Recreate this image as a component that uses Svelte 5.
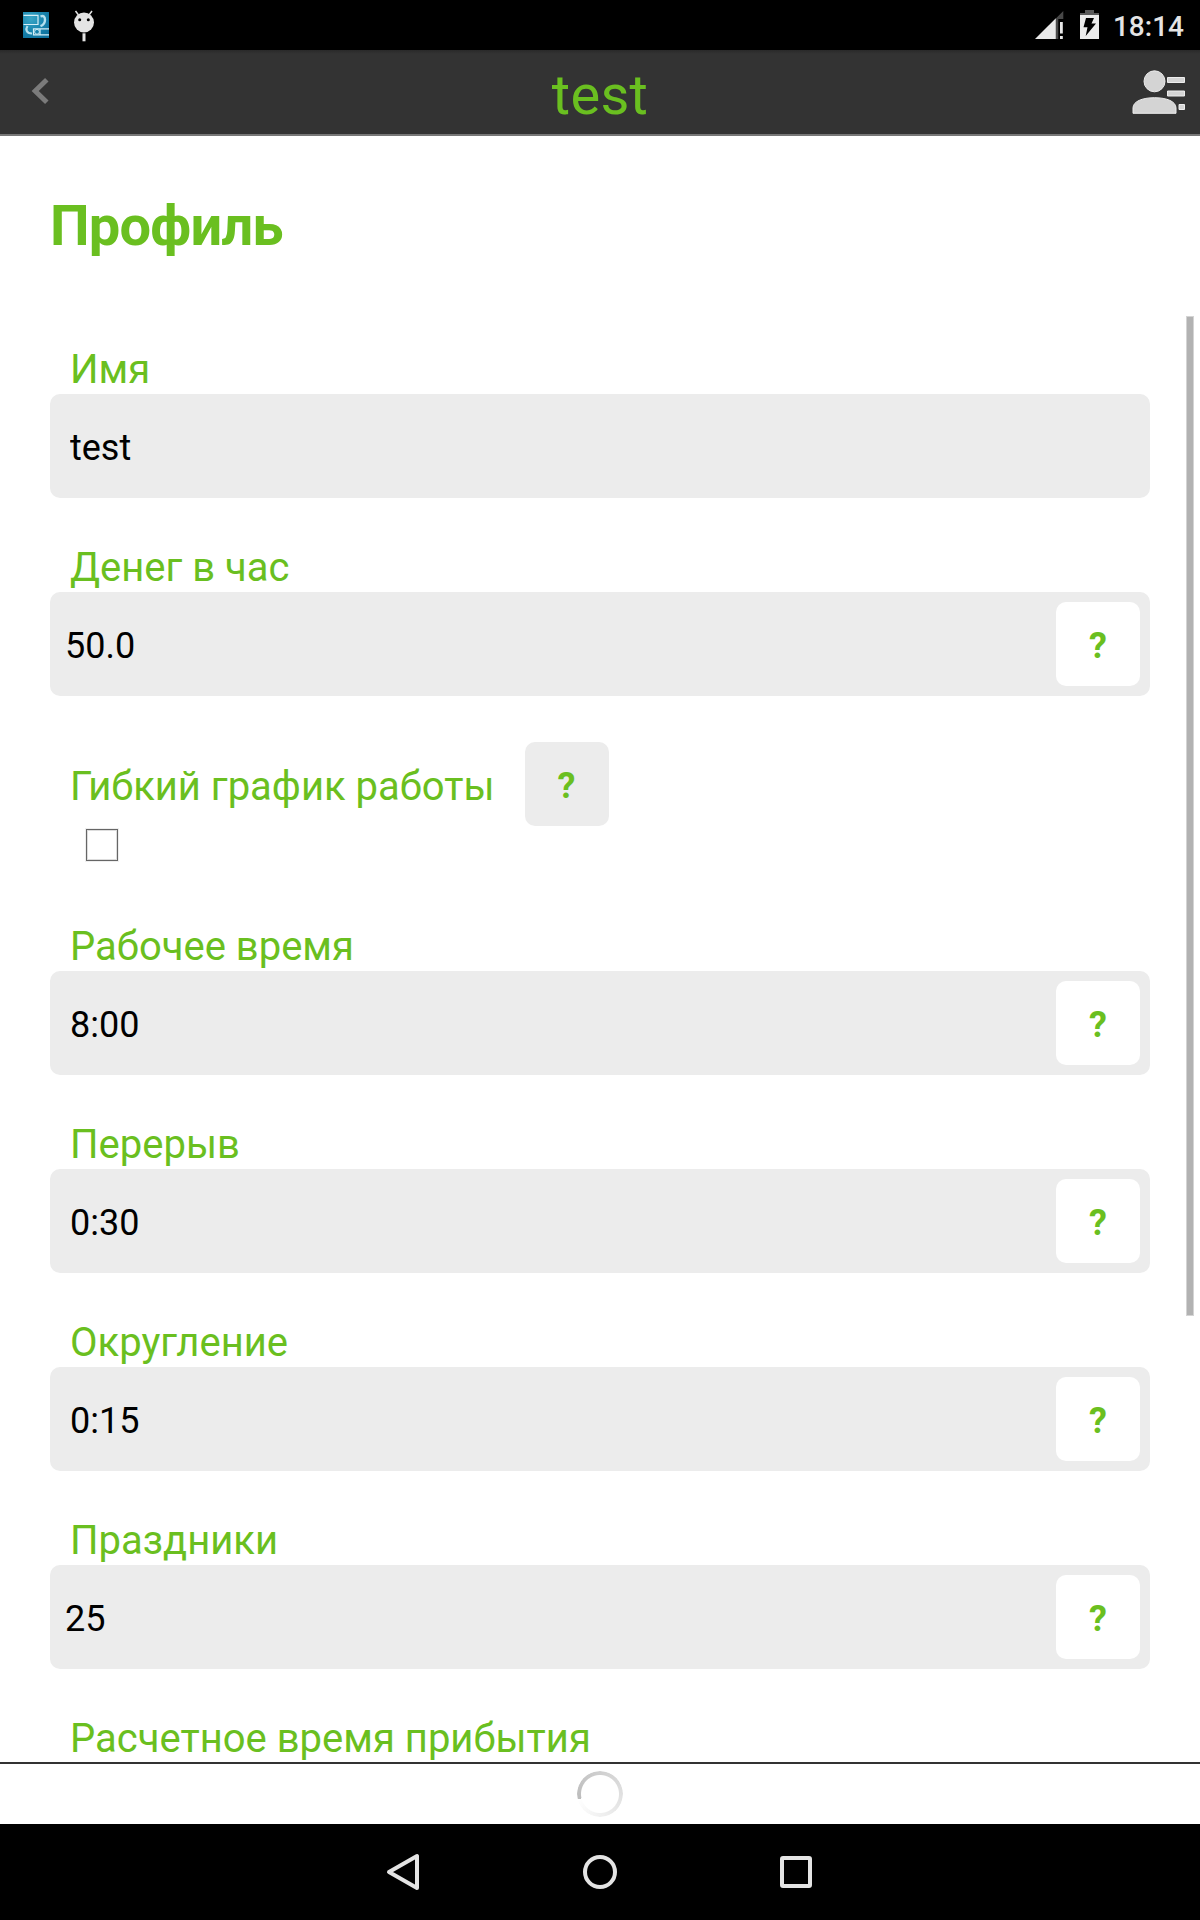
<script lang="ts">
  interface Field {
    id: string;
    label: string;
    value: string;
    help: boolean;
    kind?: "number" | "time" | "checkbox";
  }

  const title = "test";

  let fields = $state<Field[]>([
    { id: "name", label: "Имя", value: "test", help: false },
    { id: "rate", label: "Денег в час", value: "50.0", help: true, kind: "number" },
    { id: "flex", label: "Гибкий график работы", value: "", help: true, kind: "checkbox" },
    { id: "work", label: "Рабочее время", value: "8:00", help: true, kind: "time" },
    { id: "break", label: "Перерыв", value: "0:30", help: true, kind: "time" },
    { id: "round", label: "Округление", value: "0:15", help: true, kind: "time" },
    { id: "holidays", label: "Праздники", value: "25", help: true, kind: "number" },
    { id: "arrival", label: "Расчетное время прибытия", value: "", help: false, kind: "time" },
  ]);
</script>

<div class="screen">
  <div class="status-bar">
    <div class="notifications">
      <svg width="26" height="26" viewBox="0 0 26 26">
        <defs>
          <radialGradient id="tile" cx="0.3" cy="0.25" r="0.9">
            <stop offset="0" stop-color="#3aa6c6" />
            <stop offset="0.5" stop-color="#1a87b0" />
            <stop offset="1" stop-color="#0d6f9b" />
          </radialGradient>
        </defs>
        <rect width="26" height="26" fill="url(#tile)" />
        <path d="M0.5 3.3H15v9.2H0.5M26 16.8H10.5v6H26M17 16.8v6" fill="none" stroke="#d4eef6" stroke-width="1.2" />
        <circle cx="14" cy="19.8" r="2.4" fill="none" stroke="#c4e7f2" stroke-width="1" />
        <path d="M17.500 4.500c3-1.200 4.500 0 4.500 3.200 0 3-2 5.500-4.500 6.500" fill="none" stroke="#b4e0ee" stroke-width="2.400" />
        <path d="M4.500 14c-2 3-1.500 7.500 4.500 7.500" fill="none" stroke="#b4e0ee" stroke-width="2.200" />
      </svg>
      <svg width="22" height="32" viewBox="0 0 22 32">
        <path d="M2.500 1l3 4M19 1l-3 4" stroke="#e4e4e4" stroke-width="1.500" />
        <circle cx="11" cy="12.500" r="10" fill="#e4e4e4" />
        <circle cx="6.700" cy="9.700" r="1.500" fill="#000" />
        <circle cx="15.300" cy="9.700" r="1.500" fill="#000" />
        <rect x="9.500" y="23.300" width="3" height="8" fill="#e4e4e4" />
      </svg>
    </div>
    <div class="indicators">
      <svg width="29" height="29" viewBox="0 0 29 29">
        <path d="M28.300 0v8h-5v20h-2.500V7.500z" fill="#484848" />
        <path d="M0 28L20.800 7.300V28z" fill="#e8e8e8" />
        <rect x="25" y="11" width="2.800" height="11.500" fill="#e8e8e8" />
        <rect x="25" y="25" width="2.800" height="3" fill="#e8e8e8" />
      </svg>
      <svg class="battery" width="19" height="29" viewBox="0 0 19 29">
        <path d="M5 0h9v3h5v2H0V3h5z" fill="#5a5a5a" />
        <rect y="5" width="19" height="24" fill="#ececec" />
        <path d="M6 8h8l-2.500 5.500H16L5.700 26l1.800-8.700H3.500z" fill="#000" />
      </svg>
      <span class="clock">18:14</span>
    </div>
  </div>

  <header class="app-bar">
    <button class="icon-button" aria-label="Назад">
      <svg width="19" height="26" viewBox="0 0 19 26">
        <path d="M15.800 1.800L4.200 13l11.600 11.200" fill="none" stroke="#7b7b7b" stroke-width="5" />
      </svg>
    </button>
    <h1>{title}</h1>
    <button class="icon-button end" aria-label="Профиль">
      <svg width="54" height="45" viewBox="0 0 54 45">
        <g fill="#d4d4d4" stroke="#ededed">
          <circle cx="22.500" cy="11.300" r="10.500" />
          <path d="M1 43.300V38c0-6.500 9-10.300 21.500-10.300S44 31.500 44 38v5.300z" />
          <path d="M35.500 7.500h17v5h-17zM35.500 21h17v5h-17zM47 34.500h5.500v5H47z" />
        </g>
      </svg>
    </button>
  </header>

  <main>
    <h2>Профиль</h2>
    <div class="scroll-area">
      {#each fields as field (field.id)}
        <div class="field">
          {#if field.kind === "checkbox"}
            <div class="check-row">
              <label for={field.id}>{field.label}</label>
              <button class="help">?</button>
            </div>
            <input id={field.id} class="check" type="checkbox" />
          {:else}
            <label for={field.id}>{field.label}</label>
            <div class="box">
              <input
                id={field.id}
                type="text"
                class:number={field.kind === "number"}
                bind:value={field.value}
              />
              {#if field.help}
                <button class="help">?</button>
              {/if}
            </div>
          {/if}
        </div>
      {/each}
      <div class="scrollbar"></div>
    </div>
  </main>

  <footer>
    <div class="spinner"></div>
  </footer>

  <nav>
    <svg width="34" height="38" viewBox="0 0 34 38">
      <path d="M31 3v32L3 19z" fill="none" stroke="#e4e4e4" stroke-width="4" stroke-linejoin="round" />
    </svg>
    <svg width="36" height="36" viewBox="0 0 36 36">
      <circle cx="18" cy="18" r="15" fill="none" stroke="#e4e4e4" stroke-width="4" />
    </svg>
    <svg width="32" height="32" viewBox="0 0 32 32">
      <rect x="2" y="2" width="28" height="28" rx="1" fill="none" stroke="#e4e4e4" stroke-width="4" />
    </svg>
  </nav>
</div>

<style>
  :global(body) {
    margin: 0;
    background: #fff;
  }

  .screen {
    display: flex;
    flex-direction: column;
    width: 1200px;
    height: 1920px;
    overflow: hidden;
    font-family: Roboto, sans-serif;
    color: #6abf20;
  }

  button,
  input {
    margin: 0;
    padding: 0;
    border: 0;
    background: none;
    font-family: inherit;
    outline: none;
  }

  svg {
    display: block;
  }

  .status-bar {
    display: flex;
    justify-content: space-between;
    flex: none;
    height: 50px;
    background: #000;
  }

  .notifications {
    display: flex;
    gap: 24px;
    padding: 10px 0 0 23px;
  }

  .notifications svg:first-child {
    margin-top: 2px;
  }

  .indicators {
    display: flex;
    padding: 10px 16px 0 0;
  }

  .indicators svg:first-child {
    margin-top: 1px;
  }

  .battery {
    margin-left: 16px;
  }

  .clock {
    margin-left: 14px;
    color: #e4e4e4;
    font-size: 28px;
    font-weight: 500;
    line-height: 33px;
  }

  .app-bar {
    display: grid;
    grid-template-columns: 200px 1fr 200px;
    align-items: start;
    flex: none;
    box-sizing: border-box;
    height: 86px;
    border-bottom: 2px solid #777;
    background: linear-gradient(#292929, #333 4px);
  }

  .icon-button {
    display: flex;
    padding: 28px 0 0 31px;
  }

  .icon-button.end {
    justify-content: flex-end;
    padding: 20px 14px 0 0;
  }

  h1 {
    margin: 0;
    font-size: 56px;
    font-weight: 400;
    line-height: 90px;
    letter-spacing: 0.3px;
    text-align: center;
  }

  main {
    display: flex;
    flex-direction: column;
    flex: 1;
    min-height: 0;
  }

  h2 {
    flex: none;
    box-sizing: border-box;
    height: 180px;
    margin: 0;
    padding: 57px 0 0 50px;
    font-size: 56px;
    font-weight: 700;
    line-height: 66px;
    letter-spacing: -0.8px;
  }

  .scroll-area {
    position: relative;
    display: flex;
    flex-direction: column;
    gap: 46px;
    flex: 1;
    min-height: 0;
    overflow: hidden;
    padding: 30px 50px 0;
  }

  .field {
    flex: none;
  }

  label {
    display: block;
    height: 48px;
    padding-left: 20px;
    font-size: 40px;
    line-height: 48px;
    white-space: nowrap;
  }

  .box {
    display: flex;
    align-items: center;
    box-sizing: border-box;
    height: 104px;
    padding-right: 10px;
    border-radius: 10px;
    background: #ececec;
  }

  .box input {
    flex: 1;
    height: 104px;
    box-sizing: border-box;
    padding: 4px 0 0 20px;
    color: #000;
    font-size: 36px;
  }

  .box input.number {
    padding-left: 15px;
  }

  .help {
    width: 84px;
    height: 84px;
    padding-top: 3px;
    border-radius: 10px;
    background: #fff;
    color: #6abf20;
    font-size: 36px;
    font-weight: 700;
  }

  .check-row {
    display: flex;
    align-items: center;
    gap: 30px;
    height: 84px;
  }

  .check-row label {
    padding-top: 5px;
  }

  .check-row .help {
    background: #ececec;
  }

  .check {
    display: block;
    appearance: none;
    box-sizing: border-box;
    width: 32px;
    height: 32px;
    margin: 3px 0 16px 36px;
    border: 1px solid #666;
    box-shadow: 0 0 0 1px #eee, inset 0 0 0 1px #ddd;
  }

  .scrollbar {
    position: absolute;
    top: 0;
    right: 6px;
    box-sizing: border-box;
    width: 8px;
    height: 1000px;
    border: 1px solid #d4d4d4;
    background: #b2b2b2;
  }

  footer {
    display: flex;
    justify-content: center;
    flex: none;
    box-sizing: border-box;
    height: 62px;
    padding-top: 7px;
    border-top: 2px solid #333;
  }

  .spinner {
    width: 46px;
    height: 46px;
    border-radius: 50%;
    background: conic-gradient(from 257deg, #bcbcbc, #fff);
    mask: radial-gradient(circle, transparent 18.5px, #000 19.5px);
  }

  nav {
    display: flex;
    align-items: center;
    justify-content: center;
    gap: 162px;
    flex: none;
    box-sizing: border-box;
    height: 96px;
    padding-right: 2px;
    background: #000;
  }
</style>
